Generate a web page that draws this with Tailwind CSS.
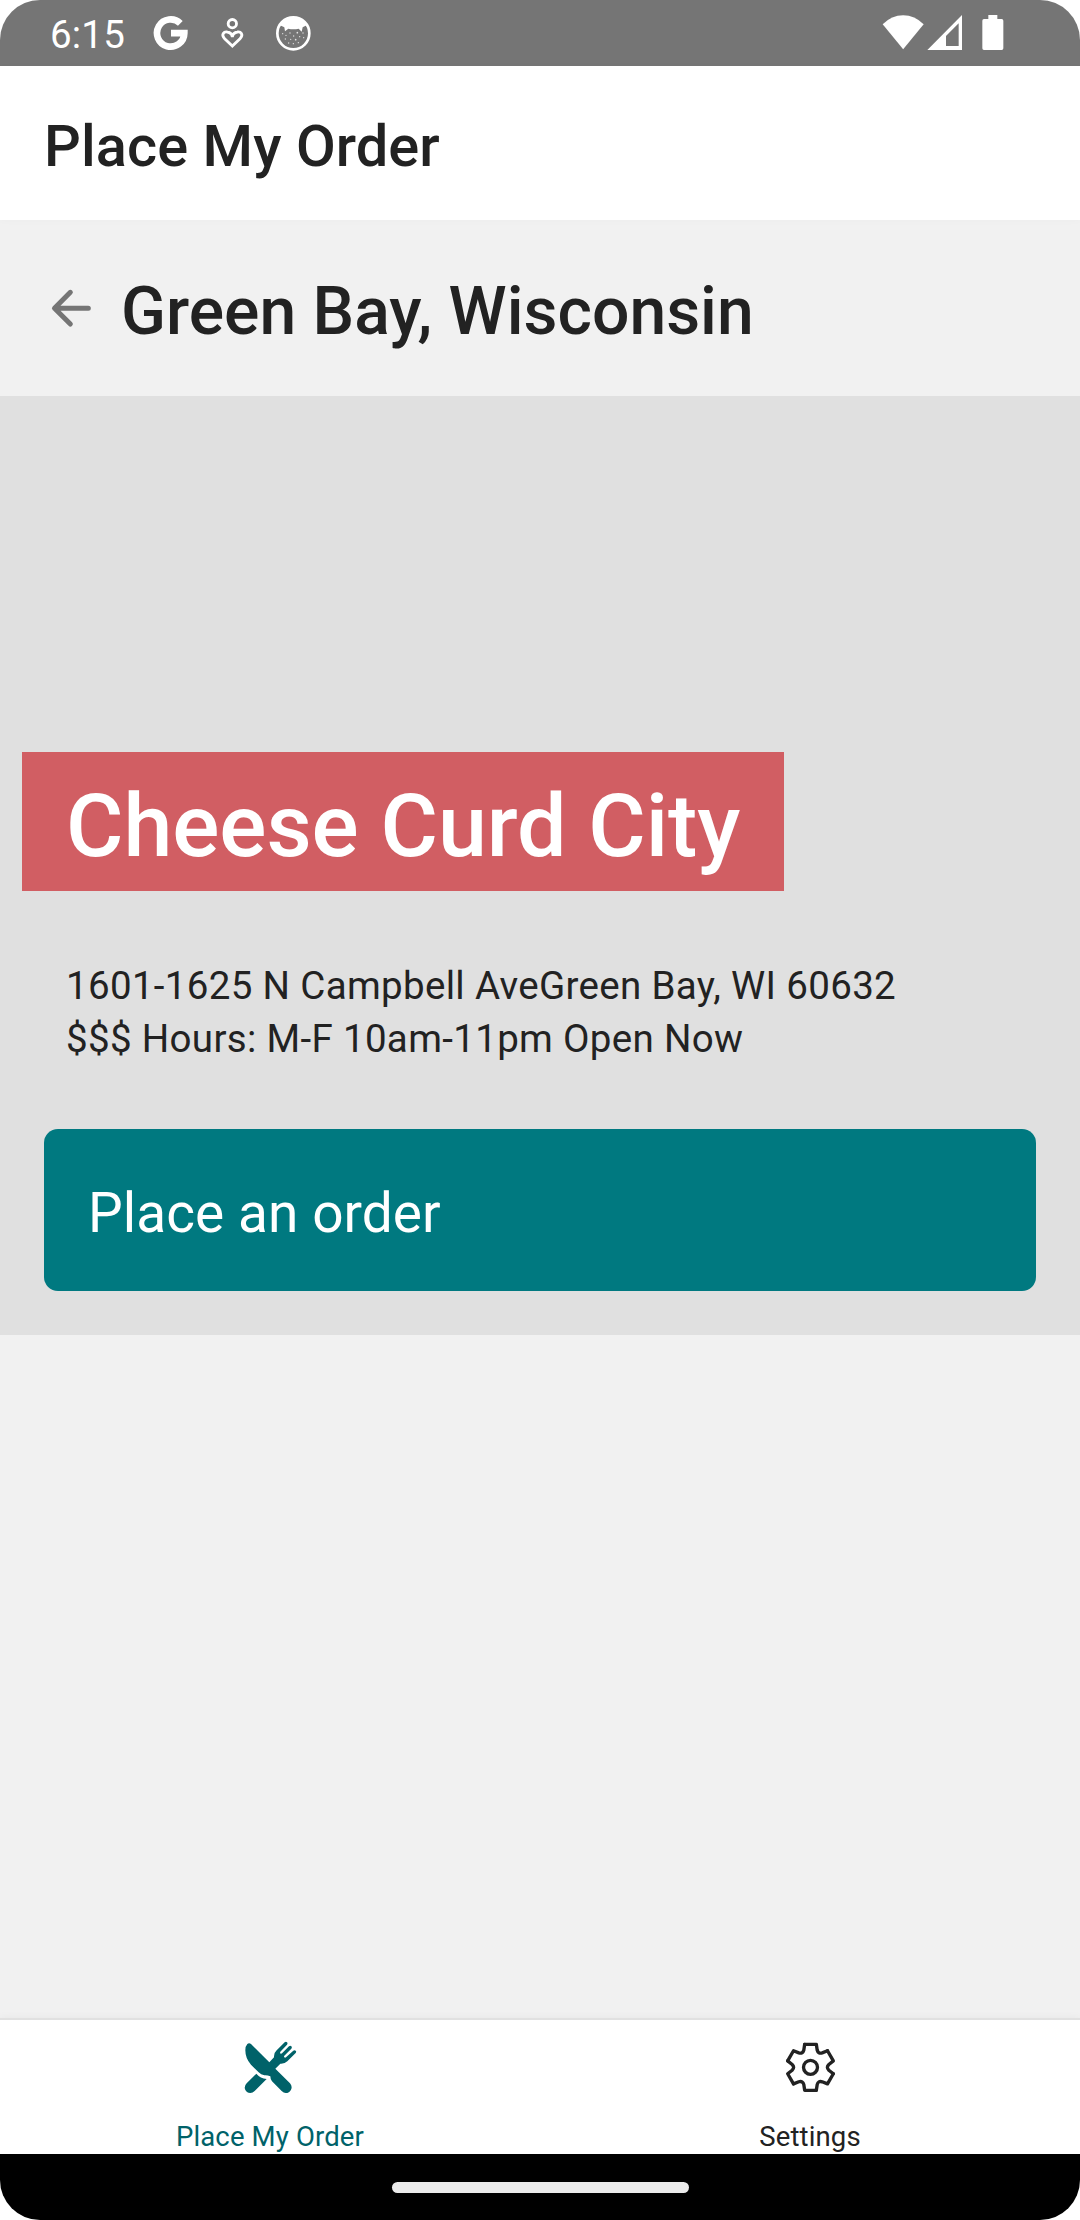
<!DOCTYPE html>
<html lang="en">
<head>
<meta charset="utf-8">
<title>Place My Order</title>
<script src="https://cdn.jsdelivr.net/npm/@tailwindcss/browser@4"></script>
</head>
<body class="bg-white">
<div class="flex h-[2220px] w-[1080px] flex-col overflow-hidden rounded-[40px] bg-[#f1f1f1] font-['Roboto',sans-serif] text-[#222222]">

  <!-- Status bar -->
  <div class="flex h-[66px] shrink-0 items-center justify-between bg-[#757575] pr-[76px] pl-[50px] text-white">
    <div class="flex items-center">
      <span class="w-[103px] pt-1 text-[38.5px] leading-[46px] tracking-[0.2px]">6:15</span>
      <svg class="h-9 w-9" viewBox="459 45 108 108" fill="none" stroke="currentColor" stroke-width="20"><path d="M541 70A41 41 0 1 0 553 99.500H513"/></svg>
      <svg class="ml-[31px] h-9 w-[25px]" viewBox="660 45 75 108" fill="none" stroke="currentColor" stroke-width="8.500"><circle cx="697" cy="71" r="12.500"/><path d="M697 138L674 116C662 104 672 94 682 96C690 97 696 103 697 111C698 103 704 97 712 96C722 94 732 104 720 116Z"/></svg>
      <svg class="ml-[30px] h-9 w-[37px]" viewBox="825 45 111 108"><circle cx="880" cy="100" r="48" fill="none" stroke="currentColor" stroke-width="8"/><path fill="currentColor" d="M840 76Q852 50 880 50Q908 50 920 76L908 82L905 95L896 86Q880 90 865 86L855 94L853 82Z"/><g fill="currentColor" opacity="0.8"><circle cx="848" cy="101" r="2"/><circle cx="858" cy="106" r="2"/><circle cx="870" cy="99" r="2"/><circle cx="892" cy="98" r="2.500"/><circle cx="909" cy="99" r="2"/><circle cx="856" cy="117" r="2"/><circle cx="872" cy="118" r="2"/><circle cx="887" cy="119" r="2.500"/><circle cx="899" cy="110" r="2"/><circle cx="911" cy="113" r="2"/><circle cx="866" cy="129" r="2"/><circle cx="880" cy="131" r="2"/><circle cx="895" cy="128" r="2"/><circle cx="881" cy="108" r="2"/></g></svg>
    </div>
    <div class="flex items-center">
      <svg class="h-9 w-[42px]" viewBox="67 45 126 108" fill="currentColor"><path d="M69 73Q96 46 130.500 46T192 73L130.500 148Z"/></svg>
      <svg class="ml-[3px] h-9 w-[35px]" viewBox="201 45 105 108" fill="currentColor"><path fill-rule="evenodd" d="M202 150L306 45V150ZM258 108V138H296V70Z"/></svg>
      <svg class="ml-[20px] h-9 w-[22px]" viewBox="365 45 66 108" fill="currentColor"><path d="M384 45H411V57H424Q429 57 429 62V145Q429 150 424 150H371Q366 150 366 145V62Q366 57 371 57H384Z"/></svg>
    </div>
  </div>

  <!-- App header -->
  <header class="relative flex h-[154px] shrink-0 items-center bg-white px-11 pt-[8px] shadow-[0_1px_8px_rgba(0,0,0,0.02)]">
    <h1 class="text-[57.75px] leading-none font-medium tracking-[0.07px]">Place My Order</h1>
  </header>

  <!-- Location row -->
  <div class="flex h-[176px] shrink-0 items-center pl-[50px]">
    <svg class="h-10 w-[42px]" viewBox="150 234 126 120" fill="none" stroke="#757575" stroke-width="15" stroke-linecap="round" stroke-linejoin="round"><path d="M265 295H164M211 247L163.500 295L211 342"/></svg>
    <h2 class="ml-[29px] pt-[7px] text-[66px] leading-none font-medium">Green Bay, Wisconsin</h2>
  </div>

  <!-- Restaurant card -->
  <main class="flex h-[939px] shrink-0 flex-col items-start bg-[#e0e0e0] pt-[356px]">
    <div class="ml-[22px] flex h-[139px] w-[762px] items-center bg-[#d15e63] px-11 pt-[8px] text-[88px] leading-none font-medium tracking-[-0.06px] whitespace-nowrap text-white">Cheese Curd City</div>
    <p class="mt-[68px] pl-[66px] text-[38.5px] leading-[53px] tracking-[0.33px]">1601-1625 N Campbell AveGreen Bay, WI 60632<br>$$$ Hours: M-F 10am-11pm Open Now</p>
    <button class="mx-11 mt-16 flex h-[162px] w-[992px] items-center rounded-[14px] bg-[#007980] px-11 pt-[6px] text-[55px] leading-none tracking-[0.07px] text-white">Place an order</button>
  </main>

  <div class="flex-1"></div>

  <!-- Tab bar -->
  <nav class="flex h-[136px] shrink-0 border-t-2 border-[#e1e1e1] bg-white shadow-[0_-1px_8px_rgba(0,0,0,0.04)]">
    <div class="flex flex-1 flex-col items-center pt-5 text-[#006269]">
      <svg class="h-[54px] w-[54px]" viewBox="279 120 162 162" fill="currentColor">
        <path d="M292 132Q297 127 303 132L358 187L372 172Q371 159 380 151L404 127Q408 124 411 127Q414 130 411 134L391 155Q389 159 392 161Q394 162 396 160L417 139Q421 136 424 139Q427 142 424 146L403 167Q401 170 403 172Q405 174 408 172L429 153Q433 149 437 152Q440 155 437 159L412 184Q404 192 391 191L376 206L420 250Q428 259 423 269Q418 279 407 279Q401 279 395 273L366 244Q361 238 361 229Q351 225 343 226Q333 224 326 217L303 194Q286 176 286 151Q286 138 292 132Z"/>
        <path d="M319 221Q331 235 350 237L314 273Q308 279 301 279Q289 279 285 268Q282 258 290 250Z"/>
      </svg>
      <span class="mt-[27px] text-[27.5px] leading-8 tracking-[0.15px]">Place My Order</span>
    </div>
    <div class="flex flex-1 flex-col items-center pt-5">
      <svg class="h-[54px] w-[54px]" viewBox="129 120 162 162" fill="none" stroke="currentColor" stroke-width="10" stroke-linecap="round" stroke-linejoin="round">
        <defs><path id="cog" d="M-17.500 -69H17.500L20 -52Q23 -40 35 -43.300L51 -49.600"/></defs>
        <g transform="translate(211.500 202)">
          <use href="#cog"/><use href="#cog" transform="rotate(60)"/><use href="#cog" transform="rotate(120)"/><use href="#cog" transform="rotate(180)"/><use href="#cog" transform="rotate(240)"/><use href="#cog" transform="rotate(300)"/>
          <circle r="21"/>
        </g>
      </svg>
      <span class="mt-[27px] text-[27.5px] leading-8 tracking-[0.15px]">Settings</span>
    </div>
  </nav>

  <!-- Gesture bar -->
  <div class="flex h-[66px] shrink-0 items-center justify-center bg-black">
    <div class="h-[11px] w-[297px] rounded-full bg-[#ebebeb]"></div>
  </div>
</div>
</body>
</html>
